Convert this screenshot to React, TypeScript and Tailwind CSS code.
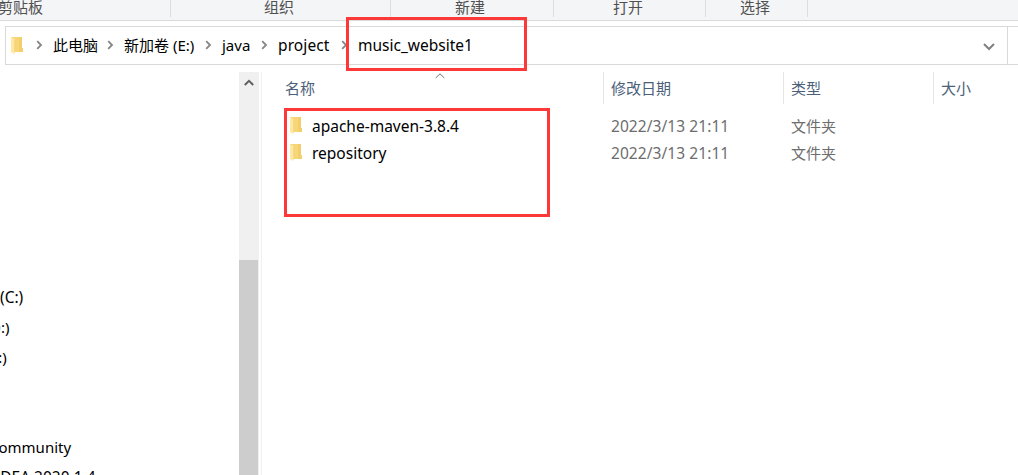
import type { ReactNode } from "react";

const files = [
  { name: "apache-maven-3.8.4", date: "2022/3/13 21:11", type: "文件夹" },
  { name: "repository", date: "2022/3/13 21:11", type: "文件夹" },
];

function FolderIcon() {
  return (
    <svg width="12" height="17" viewBox="0 0 12 17" className="block shrink-0">
      <path d="M0 0h11v11l1 .6V15H3z" fill="#f7d67a" />
      <path d="M8 0h3v11l1 .6V15H8z" fill="#f3cf6c" />
      <path d="M0 0l4 2.2V15l-1 2-3-2z" fill="#ffe8a3" />
      <path d="M3.6 2.4V15" stroke="#f0cb69" strokeWidth=".6" />
    </svg>
  );
}

function Crumb({ className, children }: { className: string; children: ReactNode }) {
  return (
    <>
      <svg width="7" height="10" viewBox="0 0 7 10" className="block shrink-0">
        <path d="M1.2 1.2L5 5 1.2 8.8" fill="none" stroke="#858585" strokeWidth="1.8" />
      </svg>
      <span className={`ml-[10px] block shrink-0 whitespace-pre ${className}`}>{children}</span>
    </>
  );
}

function RibbonGroup({ className, children }: { className: string; children: ReactNode }) {
  return (
    <div className={`h-[17px] shrink-0 border-r border-[#dcdddf] whitespace-nowrap ${className}`}>
      {children}
    </div>
  );
}

export default function App() {
  return (
    <div className="relative flex h-[475px] w-[1018px] flex-col overflow-hidden bg-white font-['Noto_Sans','Noto_Sans_CJK_SC',sans-serif] text-[15px] leading-5 text-black">
      {/* Ribbon group labels */}
      <div className="flex h-[21px] shrink-0 border-b border-[#d9dadb] bg-[#f4f5f7] leading-[15px] text-[#505050]">
        <RibbonGroup className="w-[171px]">
          <span className="-ml-[2px]">剪贴板</span>
        </RibbonGroup>
        <RibbonGroup className="w-[220px] pl-[93px]">组织</RibbonGroup>
        <RibbonGroup className="w-[163px] pl-[64px]">新建</RibbonGroup>
        <RibbonGroup className="w-[152px] pl-[59px]">打开</RibbonGroup>
        <RibbonGroup className="w-[102px] pl-[34px]">选择</RibbonGroup>
      </div>

      {/* Address bar */}
      <div className="mt-[5px] ml-[5px] flex h-[39px] shrink-0 border-y border-l border-[#d9d9d9]">
        <div className="flex flex-1 items-center pl-[5px]">
          <FolderIcon />
          <div className="flex items-center pb-[2px] pl-[13px]">
            <Crumb className="w-[54px]">此电脑</Crumb>
            <Crumb className="w-[81px]">新加卷 (E:)</Crumb>
            <Crumb className="w-[39px]">java</Crumb>
            <Crumb className="w-[63px] text-[15.5px] tracking-[0.1px]">project</Crumb>
            <Crumb className="text-[15.5px]">music_website1</Crumb>
          </div>
          <svg width="12" height="8" viewBox="0 0 12 8" className="mt-[3px] mr-[12px] ml-auto block">
            <path d="M1 1l5 5 5-5" fill="none" stroke="#808080" strokeWidth="2" />
          </svg>
        </div>
        <div className="w-[11px] border-l border-[#d9d9d9]" />
      </div>

      <div className="mt-[7px] flex min-h-0 flex-1">
        {/* Navigation pane */}
        <div className="w-[239px] overflow-hidden pt-[210px] leading-[30px] whitespace-nowrap">
          <div className="h-[30px] text-[15.5px]">(C:)</div>
          <div className="-ml-[10px] h-[30px]">D:)</div>
          <div className="-ml-[10px] h-[30px]">E:)</div>
          <div className="h-[60px]" />
          <div className="-ml-[11px] h-[30px]">Community</div>
          <div className="-ml-[5px] h-[30px] text-[15.5px]">IDEA 2020.1.4</div>
        </div>
        <div className="flex w-5 flex-col bg-[#f0f0f0]">
          <div className="flex h-[188px] justify-center pt-[7px]">
            <svg width="10" height="7" viewBox="0 0 10 7" className="block">
              <path d="M.8 6L5 1.8 9.2 6" fill="none" stroke="#606060" strokeWidth="2" />
            </svg>
          </div>
          <div className="w-[19px] flex-1 bg-[#cdcdcd]" />
        </div>

        {/* File list */}
        <div className="ml-[2px] flex-1 border-l border-[#f0f0f0]">
          <div className="flex h-8 text-[#4c607a]">
            <div className="relative w-[342px] border-r border-[#e5e5e5] pt-[6px] pl-[23px]">
              名称
              <svg width="10" height="6" viewBox="0 0 10 6" className="absolute top-px left-[173px]">
                <path d="M.7 5L5 .8 9.3 5" fill="none" stroke="#707070" />
              </svg>
            </div>
            <div className="w-[180px] border-r border-[#e5e5e5] pt-[6px] pl-[7px]">修改日期</div>
            <div className="w-[150px] border-r border-[#e5e5e5] pt-[6px] pl-[7px]">类型</div>
            <div className="pt-[6px] pl-[7px]">大小</div>
          </div>
          <div className="pt-[8px]">
            {files.map((file) => (
              <div key={file.name} className="flex h-[27px] items-center text-[#6d6d6d]">
                <div className="flex w-[342px] items-center pl-[28px]">
                  <FolderIcon />
                  <span className="ml-[10px] text-[15.5px] text-black">{file.name}</span>
                </div>
                <div className="w-[180px] pl-[7px] text-[15.5px] tracking-[0.07px]">{file.date}</div>
                <div className="pl-[7px]">{file.type}</div>
              </div>
            ))}
          </div>
        </div>
      </div>

      {/* Highlight frames */}
      <div className="absolute top-[17px] left-[346px] h-[54px] w-[181px] border-[3px] border-[#fd3838]" />
      <div className="absolute top-[108px] left-[284px] h-[109px] w-[266px] border-[3px] border-[#fd3838]" />
    </div>
  );
}
